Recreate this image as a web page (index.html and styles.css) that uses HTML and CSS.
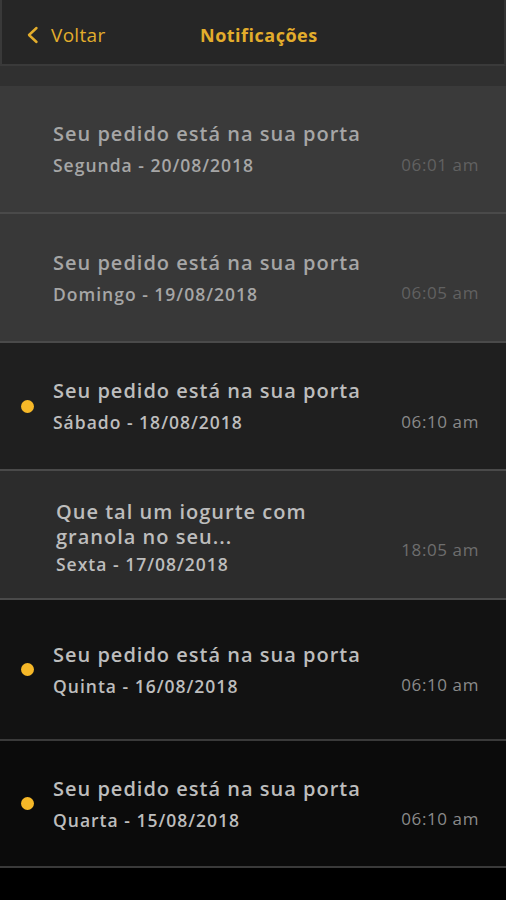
FILE: index.html
```html
<!DOCTYPE html>
<html lang="pt-BR">

<head>
    <meta charset="UTF-8">
    <meta name="viewport" content="width=device-width, initial-scale=1.0">
    <title>Notificações</title>
    <link rel="stylesheet" href="styles.css">
</head>

<body>
    <header class="top-bar">
        <a href="#" class="back-link">
            <svg class="back-icon" width="14" height="18" viewBox="0 0 14 18">
                <path d="M10.5 2 L3 9 L10.5 16" fill="none" stroke="#e3ad2c" stroke-width="2.4" stroke-linecap="round" stroke-linejoin="round"/>
            </svg>
            <span>Voltar</span>
        </a>
        <h1 class="page-title">Notificações</h1>
    </header>

    <div class="spacer"></div>

    <ul class="notification-list">
        <li class="notification row-1">
            <span class="dot-slot"></span>
            <div class="notification-text">
                <p class="notification-title">Seu pedido está na sua porta</p>
                <p class="notification-date">Segunda - 20/08/2018</p>
            </div>
            <span class="notification-time">06:01 am</span>
        </li>
        <li class="notification row-2">
            <span class="dot-slot"></span>
            <div class="notification-text">
                <p class="notification-title">Seu pedido está na sua porta</p>
                <p class="notification-date">Domingo - 19/08/2018</p>
            </div>
            <span class="notification-time">06:05 am</span>
        </li>
        <li class="notification row-3 unread">
            <span class="dot-slot"><span class="dot"></span></span>
            <div class="notification-text">
                <p class="notification-title">Seu pedido está na sua porta</p>
                <p class="notification-date">Sábado - 18/08/2018</p>
            </div>
            <span class="notification-time">06:10 am</span>
        </li>
        <li class="notification row-4">
            <span class="dot-slot"></span>
            <div class="notification-text indent">
                <p class="notification-title">Que tal um iogurte com<br>granola no seu...</p>
                <p class="notification-date">Sexta - 17/08/2018</p>
            </div>
            <span class="notification-time">18:05 am</span>
        </li>
        <li class="notification row-5 unread">
            <span class="dot-slot"><span class="dot"></span></span>
            <div class="notification-text">
                <p class="notification-title">Seu pedido está na sua porta</p>
                <p class="notification-date">Quinta - 16/08/2018</p>
            </div>
            <span class="notification-time">06:10 am</span>
        </li>
        <li class="notification row-6 unread">
            <span class="dot-slot"><span class="dot"></span></span>
            <div class="notification-text">
                <p class="notification-title">Seu pedido está na sua porta</p>
                <p class="notification-date">Quarta - 15/08/2018</p>
            </div>
            <span class="notification-time">06:10 am</span>
        </li>
    </ul>
</body>

</html>
```

FILE: styles.css
```css
* {
    margin: 0;
    padding: 0;
    box-sizing: border-box;
    font-family: "Open Sans", "DejaVu Sans", sans-serif;
}

body {
    background-color: #000;
    min-height: 100vh;
}

.top-bar {
    height: 66px;
    background-color: #262626;
    border-left: 2px solid #393939;
    border-right: 2px solid #333;
    border-bottom: 2px solid #3a3a3a;
    display: flex;
    align-items: center;
    padding: 5px 0 0 24px;
}

.back-link {
    display: flex;
    align-items: center;
    gap: 11px;
    width: 174px;
    color: #e3ad2c;
    text-decoration: none;
    font-size: 19px;
    letter-spacing: 0.3px;
}

.back-icon {
    margin-top: 1px;
}

.page-title {
    color: #e3ad2c;
    font-size: 18px;
    font-weight: 700;
    letter-spacing: 0.5px;
}

.spacer {
    height: 20px;
    background-color: #303030;
}

.notification-list {
    list-style: none;
}

.notification {
    display: flex;
    align-items: center;
    padding-right: 27px;
    border-bottom: 2px solid #4a4a4a;
}

.dot-slot {
    width: 53px;
    display: flex;
    justify-content: center;
    padding-left: 2px;
}

.dot {
    width: 13px;
    height: 13px;
    border-radius: 50%;
    background-color: #f6b828;
}

.notification-text {
    flex-grow: 1;
}

.notification-text.indent {
    padding-left: 3px;
    padding-top: 4px;
}

.notification-title {
    font-size: 20px;
    font-weight: 600;
    line-height: 24px;
    letter-spacing: 1px;
    color: #bdbdbd;
}

.notification-date {
    font-size: 17.5px;
    font-weight: 600;
    line-height: 22px;
    letter-spacing: 1px;
    margin-top: 8px;
    color: #bdbdbd;
}

.notification-time {
    font-size: 17px;
    letter-spacing: 0.6px;
    color: #8a8a8a;
    margin-top: 30px;
}

.row-1 {
    height: 128px;
    background-color: #3a3a3a;
}

.row-2 {
    height: 129px;
    background-color: #383838;
}

.row-3 {
    height: 128px;
    background-color: #1f1f1f;
}

.row-4 {
    height: 129px;
    background-color: #2c2c2c;
}

.row-5 {
    height: 141px;
    background-color: #121212;
    border-bottom-color: #3a3a3a;
}

.row-6 {
    height: 127px;
    background-color: #0b0b0b;
    border-bottom-color: #3a3a3a;
}

.row-1 .notification-title,
.row-2 .notification-title,
.row-1 .notification-date,
.row-2 .notification-date {
    color: #a6a6a6;
}

.row-1 .notification-time,
.row-2 .notification-time {
    color: #616161;
}

.row-4 .notification-title {
    line-height: 25px;
}

.row-4 .notification-time {
    color: #6e6e6e;
}

.row-4 .notification-date {
    margin-top: 4px;
}
```
